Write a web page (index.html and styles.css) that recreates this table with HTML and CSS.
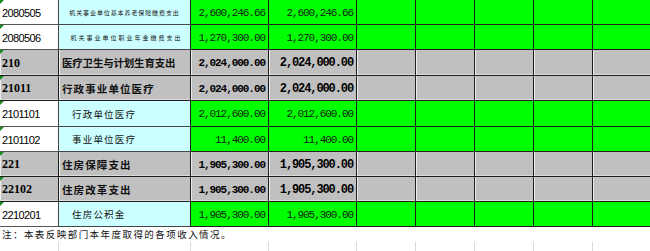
FILE: index.html
```html
<!DOCTYPE html>
<html lang="zh">
<head>
<meta charset="utf-8">
<title>收入表</title>
<link rel="stylesheet" href="styles.css">
</head>
<body>
<div class="sheet">
  <div class="row h25 green-row">
    <div class="c code tri">2080505</div>
    <div class="c name cyan tiny">机关事业单位基本养老保险缴费支出</div>
    <div class="c num">2,600,246.66</div>
    <div class="c num">2,600,246.66</div>
    <div class="c"></div><div class="c"></div><div class="c"></div><div class="c"></div><div class="c"></div>
  </div>
  <div class="row h25 green-row">
    <div class="c code tri">2080506</div>
    <div class="c name cyan tiny wide">机关事业单位职业年金缴费支出</div>
    <div class="c num">1,270,300.00</div>
    <div class="c num">1,270,300.00</div>
    <div class="c"></div><div class="c"></div><div class="c"></div><div class="c"></div><div class="c"></div>
  </div>
  <div class="row h26 grey-row">
    <div class="c code bold tri">210</div>
    <div class="c name bold tight">医疗卫生与计划生育支出</div>
    <div class="c num bold">2,024,000.00</div>
    <div class="c num bold big">2,024,000.00</div>
    <div class="c"></div><div class="c"></div><div class="c"></div><div class="c"></div><div class="c"></div>
  </div>
  <div class="row h25 grey-row">
    <div class="c code bold tri">21011</div>
    <div class="c name bold">行政事业单位医疗</div>
    <div class="c num bold">2,024,000.00</div>
    <div class="c num bold big">2,024,000.00</div>
    <div class="c"></div><div class="c"></div><div class="c"></div><div class="c"></div><div class="c"></div>
  </div>
  <div class="row h26 green-row">
    <div class="c code tri">2101101</div>
    <div class="c name cyan indent">行政单位医疗</div>
    <div class="c num">2,012,600.00</div>
    <div class="c num">2,012,600.00</div>
    <div class="c"></div><div class="c"></div><div class="c"></div><div class="c"></div><div class="c"></div>
  </div>
  <div class="row h25 green-row">
    <div class="c code tri">2101102</div>
    <div class="c name cyan indent">事业单位医疗</div>
    <div class="c num">11,400.00</div>
    <div class="c num">11,400.00</div>
    <div class="c"></div><div class="c"></div><div class="c"></div><div class="c"></div><div class="c"></div>
  </div>
  <div class="row h25 grey-row">
    <div class="c code bold tri">221</div>
    <div class="c name bold">住房保障支出</div>
    <div class="c num bold">1,905,300.00</div>
    <div class="c num bold big">1,905,300.00</div>
    <div class="c"></div><div class="c"></div><div class="c"></div><div class="c"></div><div class="c"></div>
  </div>
  <div class="row h25 grey-row">
    <div class="c code bold tri">22102</div>
    <div class="c name bold">住房改革支出</div>
    <div class="c num bold">1,905,300.00</div>
    <div class="c num bold big">1,905,300.00</div>
    <div class="c"></div><div class="c"></div><div class="c"></div><div class="c"></div><div class="c"></div>
  </div>
  <div class="row h25 green-row">
    <div class="c code tri">2210201</div>
    <div class="c name cyan indent">住房公积金</div>
    <div class="c num">1,905,300.00</div>
    <div class="c num">1,905,300.00</div>
    <div class="c"></div><div class="c"></div><div class="c"></div><div class="c"></div><div class="c"></div>
  </div>
  <div class="note">注：本表反映部门本年度取得的各项收入情况。</div>
  <div class="row blank">
    <div class="g"></div><div class="g"></div><div class="g"></div><div class="g"></div><div class="g"></div><div class="g"></div><div class="g"></div><div class="g"></div><div class="g"></div>
  </div>
</div>
</body>
</html>
```
FILE: styles.css
```css
html, body {
  margin: 0;
  padding: 0;
  background: #fff;
  overflow: hidden;
}
body {
  width: 650px;
  height: 251px;
  font-family: "Noto Sans CJK SC", sans-serif;
}
.sheet {
  width: 652px;
}
.row {
  display: grid;
  grid-template-columns: 59px 132px 78px 88px 59px 59px 59px 59px 59px;
}
.h25 { height: 25px; }
.h26 { height: 26px; }
.c {
  box-sizing: border-box;
  border-right: 1px solid #1e1e1e;
  border-bottom: 1px solid #1e1e1e;
  display: flex;
  align-items: center;
  white-space: nowrap;
  overflow: hidden;
  position: relative;
  color: #000;
}
.green-row .c { background: #00ff00; }
.green-row .c.code { background: #fff; border-bottom-color: #555; border-right-color: #444; }
.green-row .c.cyan { background: #ccffff; border-bottom-color: #444; }
.grey-row .c {
  background: #c0c0c0;
  box-shadow: inset 1px 0 0 #ececec, inset 0 -1px 0 #dcdcdc;
}
.code {
  font-family: "Liberation Sans", Arial, sans-serif;
  font-size: 11px;
  letter-spacing: -0.6px;
  padding-left: 2px;
  padding-top: 1px;
}
.code.bold {
  font-family: "Liberation Serif", serif;
  font-weight: bold;
  font-size: 12px;
  letter-spacing: 0;
}
.tri::before {
  content: "";
  position: absolute;
  left: 0;
  top: 0;
  border-top: 4px solid #1a8a1a;
  border-right: 4px solid transparent;
}
.name {
  font-family: "Noto Sans CJK SC", sans-serif;
  color: #111;
}
.name.bold {
  font-weight: bold;
  font-size: 10.5px;
  letter-spacing: 1.1px;
  padding-left: 3px;
}
.name.bold.tight { letter-spacing: -0.2px; }
.name.indent {
  font-size: 9.5px;
  letter-spacing: 1.2px;
  padding-left: 13px;
}
.name.tiny {
  justify-content: center;
  font-size: 6px;
  letter-spacing: 0.9px;
  padding-left: 0;
}
.name.tiny.wide { letter-spacing: 2px; padding-left: 4px; }
.num {
  justify-content: flex-end;
  font-family: "Liberation Mono", monospace;
  font-size: 11px;
  letter-spacing: -1.05px;
  padding-right: 3px;
  padding-top: 1px;
  color: #102010;
}
.num.bold {
  font-weight: bold;
  color: #000;
}
.num.big {
  font-size: 12px;
  letter-spacing: -1.1px;
}
.note {
  height: 15px;
  line-height: 14px;
  font-size: 9.5px;
  letter-spacing: 1.45px;
  padding-left: 2px;
  color: #111;
  white-space: nowrap;
}
.row.blank { height: 12px; }
.g {
  box-sizing: border-box;
  border-right: 1px solid #dadada;
}
```
